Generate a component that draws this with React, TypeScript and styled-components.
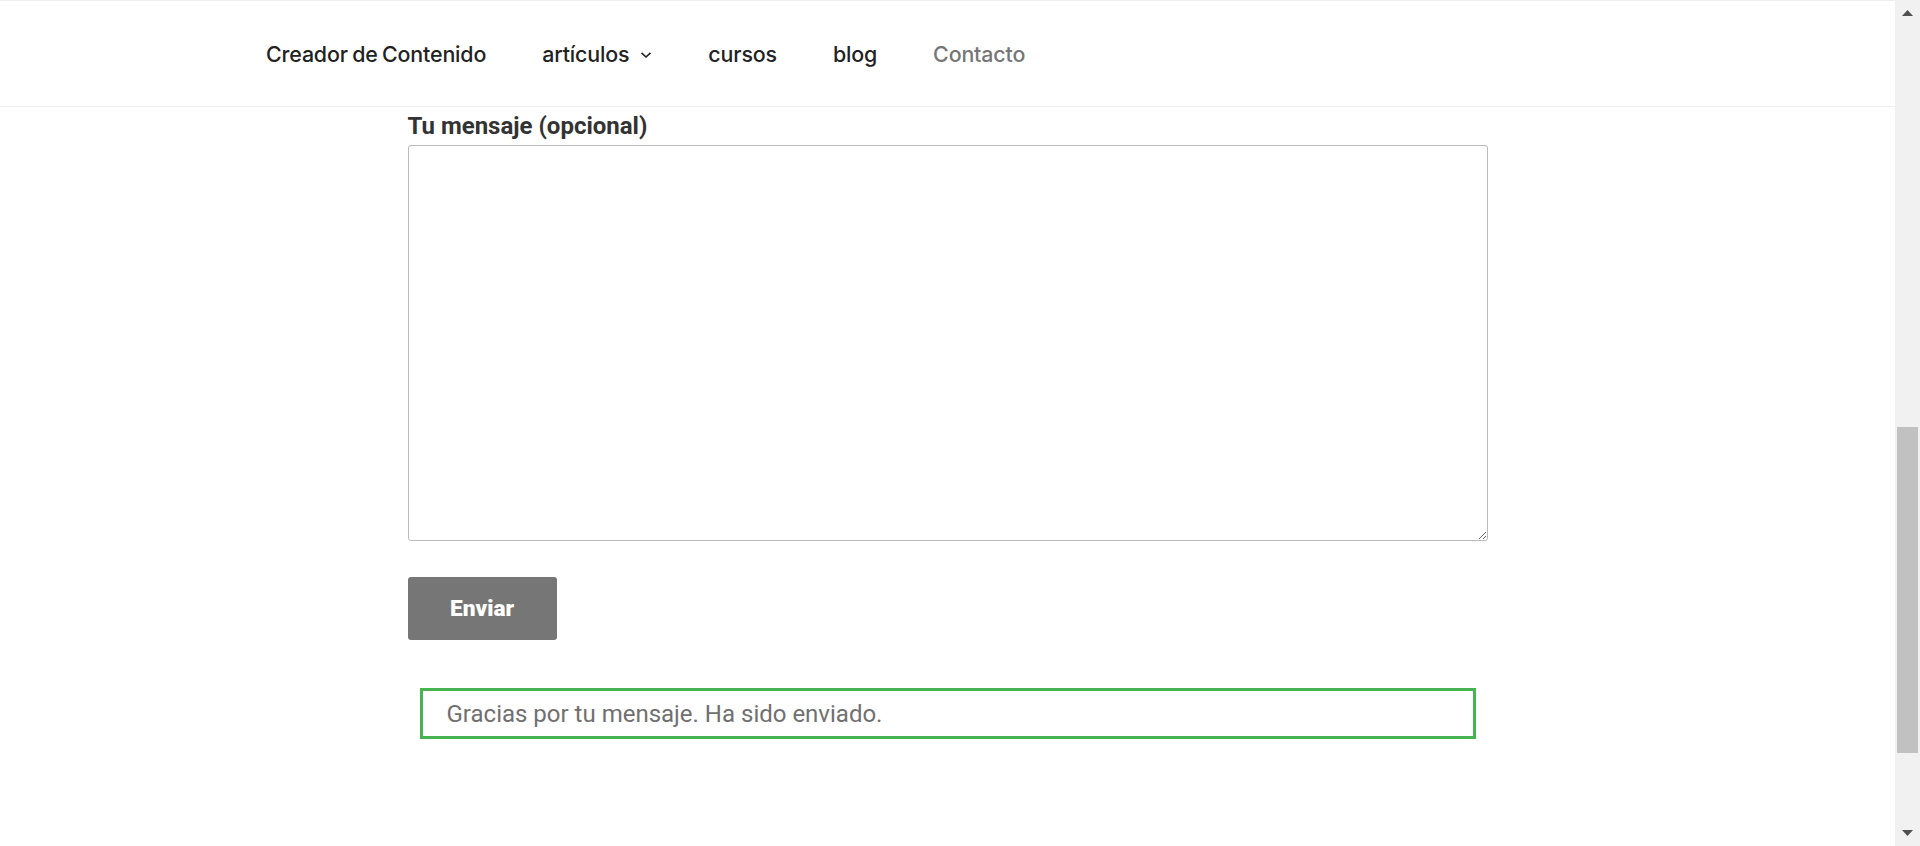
import React from "react";
import styled, { createGlobalStyle } from "styled-components";

const Global = createGlobalStyle`
  html, body { margin: 0; padding: 0; height: 846px; overflow: hidden; background: #fff; }
  #root { height: 846px; }
  * { box-sizing: border-box; }
`;

const Frame = styled.div`
  display: flex;
  height: 846px;
  width: 1920px;
`;

const Page = styled.div`
  flex: 1;
  display: flex;
  flex-direction: column;
  min-width: 0;
`;

const Header = styled.header`
  height: 107px;
  border-top: 1px solid #eee;
  border-bottom: 1px solid #eee;
  background: #fff;
  display: flex;
  align-items: center;
`;

const NavInner = styled.nav`
  width: 1363px;
  margin: 0 auto;
  display: flex;
  align-items: center;
  gap: 56px;
  padding-top: 2px;
`;

const NavLink = styled.a<{ $current?: boolean }>`
  display: flex;
  align-items: center;
  gap: 11px;
  font-family: Inter, "Liberation Sans", sans-serif;
  font-weight: 500;
  font-size: 21.4px;
  letter-spacing: -0.15px;
  word-spacing: -1.2px;
  color: ${(p) => (p.$current ? "#767676" : "#222")};
  text-decoration: none;
  line-height: 1;
`;

const Main = styled.main`
  width: 1080px;
  margin: 0 auto;
  padding-top: 4px;
  display: flex;
  flex-direction: column;
`;

const Label = styled.label`
  font-family: Roboto, "Liberation Sans", sans-serif;
  font-weight: 700;
  font-size: 24px;
  line-height: 30px;
  color: #333;
  display: block;
`;

const TextArea = styled.textarea`
  margin-top: 4px;
  width: 1080px;
  height: 396px;
  border: 1px solid #bbb;
  border-radius: 3px;
  background: #fff;
  display: block;
  font-family: Roboto, sans-serif;
  font-size: 18px;
  outline: none;
`;

const Submit = styled.button`
  margin-top: 36px;
  width: 149px;
  height: 63px;
  border: none;
  border-radius: 3px;
  background: #767676;
  color: #fff;
  font-family: Roboto, "Liberation Sans", sans-serif;
  font-weight: 900;
  font-size: 22.7px;
  padding: 0;
  cursor: pointer;
`;

const Response = styled.div`
  margin: 48px 12px 0;
  height: 51px;
  border: 3px solid #46b450;
  display: flex;
  align-items: center;
  padding: 0 24px;
  font-family: Roboto, "Liberation Sans", sans-serif;
  font-size: 24px;
  color: #707070;
`;

const ScrollBar = styled.div`
  width: 25px;
  background: #f1f1f1;
  display: flex;
  flex-direction: column;
  align-items: center;
`;

const Arrow = styled.div<{ $down?: boolean }>`
  height: 25px;
  width: 25px;
  display: flex;
  align-items: ${(p) => (p.$down ? "flex-start" : "flex-end")};
  justify-content: center;
  padding: ${(p) => (p.$down ? "9px 0 0" : "0 0 9px")};
`;

const Track = styled.div`
  flex: 1;
  width: 25px;
  padding: 0 2px;
`;

const Thumb = styled.div`
  width: 21px;
  background: #c1c1c1;
`;

const Chevron = () => (
  <svg width="12" height="8" viewBox="0 0 12 8" fill="none">
    <path d="M1.5 1.8 L6 6 L10.5 1.8" stroke="#222" strokeWidth="1.6" />
  </svg>
);

const Tri = ({ down }: { down?: boolean }) => (
  <svg width="11" height="6" viewBox="0 0 11 6">
    <path d={down ? "M0 0 H11 L5.5 6 Z" : "M0 6 H11 L5.5 0 Z"} fill="#505050" />
  </svg>
);

export default function App() {
  const thumbTop = 402;
  const thumbHeight = 326;
  return (
    <>
      <Global />
      <Frame>
        <Page>
          <Header>
            <NavInner>
              <NavLink href="#">Creador de Contenido</NavLink>
              <NavLink href="#">
                artículos <Chevron />
              </NavLink>
              <NavLink href="#">cursos</NavLink>
              <NavLink href="#">blog</NavLink>
              <NavLink href="#" $current>
                Contacto
              </NavLink>
            </NavInner>
          </Header>
          <Main>
            <Label htmlFor="msg">Tu mensaje (opcional)</Label>
            <TextArea id="msg" />
            <Submit type="button">Enviar</Submit>
            <Response>Gracias por tu mensaje. Ha sido enviado.</Response>
          </Main>
        </Page>
        <ScrollBar>
          <Arrow>
            <Tri />
          </Arrow>
          <Track>
            <Thumb style={{ marginTop: thumbTop, height: thumbHeight }} />
          </Track>
          <Arrow $down>
            <Tri down />
          </Arrow>
        </ScrollBar>
      </Frame>
    </>
  );
}
